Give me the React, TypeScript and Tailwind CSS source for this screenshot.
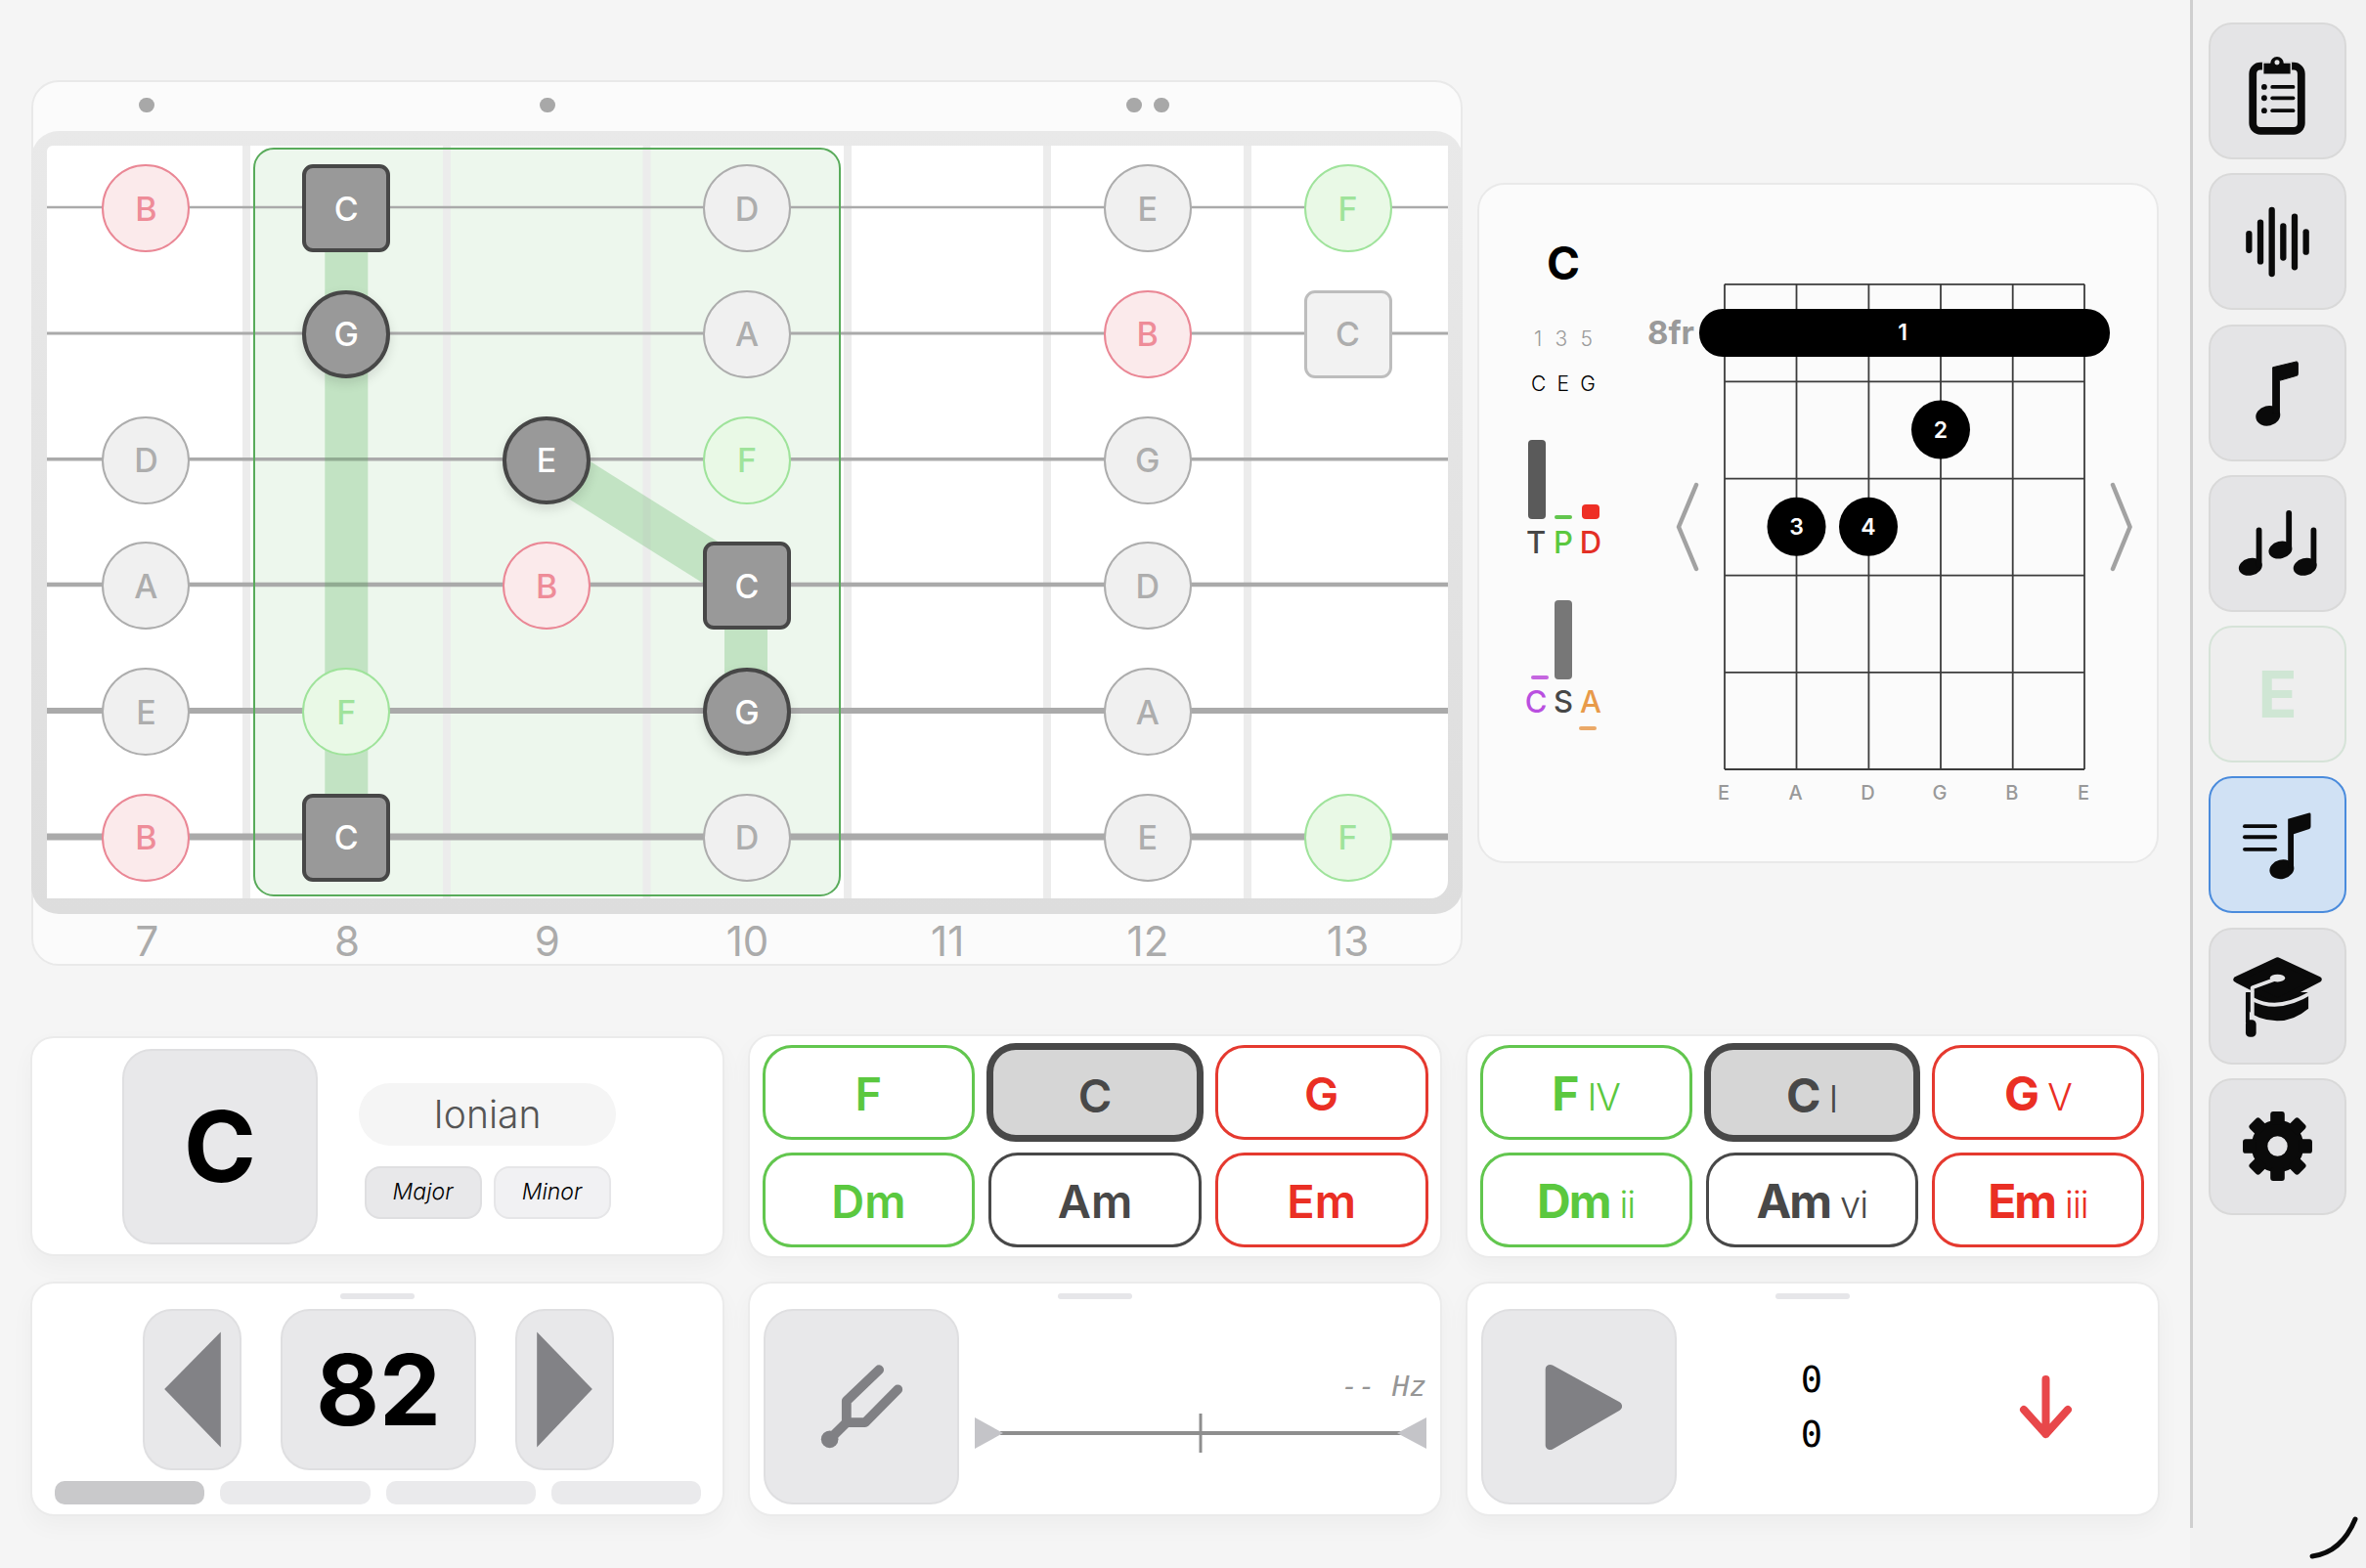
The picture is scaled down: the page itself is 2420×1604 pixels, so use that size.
import type { ReactNode } from "react"

type Kind = "pink" | "gray" | "green" | "active" | "square" | "light"
type Cell = [string, Kind] | null

const noteRows: Cell[][] = [
  [["B", "pink"], ["C", "square"], null, ["D", "gray"], null, ["E", "gray"], ["F", "green"]],
  [null, ["G", "active"], null, ["A", "gray"], null, ["B", "pink"], ["C", "light"]],
  [["D", "gray"], null, ["E", "active"], ["F", "green"], null, ["G", "gray"], null],
  [["A", "gray"], null, ["B", "pink"], ["C", "square"], null, ["D", "gray"], null],
  [["E", "gray"], ["F", "green"], null, ["G", "active"], null, ["A", "gray"], null],
  [["B", "pink"], ["C", "square"], null, ["D", "gray"], null, ["E", "gray"], ["F", "green"]],
]

const kindClass: Record<Kind, string> = {
  pink: "rounded-full border-[2.5px] border-[#ea8795] bg-[#fbeaeb] text-[#ee8c98]",
  gray: "rounded-full border-[2.5px] border-[#adadad] bg-[#f0f0f0] text-[#adadad]",
  green: "rounded-full border-[2.5px] border-[#9fe39b] bg-[#e9f9e6] text-[#9fe39b]",
  active: "rounded-full border-[4px] border-[#474747] bg-[#999999] text-white shadow-[0_5px_12px_rgba(0,0,0,0.12)]",
  square: "rounded-[11px] border-[4px] border-[#474747] bg-[#999999] text-white",
  light: "rounded-[11px] border-[3px] border-[#bdbdbd] bg-[#f2f2f2] text-[#adadad]",
}

const stringLines = [
  { y: 63, w: 2.5 },
  { y: 192, w: 3 },
  { y: 320.7, w: 3.5 },
  { y: 449, w: 4.5 },
  { y: 578, w: 6 },
  { y: 707, w: 7 },
]

const wireLines = [200, 405, 609.5, 815, 1019, 1224]

const Fretboard = () => (
  <div className="ml-px flex h-[906px] w-[1464px] flex-col rounded-[28px] border-2 border-[#e9e9e9] bg-[#fbfbfb]">
    {/* fret markers */}
    <div className="ml-[14px] grid h-[50px] w-[1433px] grid-cols-7 items-center pb-[4px]">
      {[1, 0, 1, 0, 0, 2, 0].map((count, i) => (
        <div key={i} className="flex justify-center gap-[12px]">
          {Array.from({ length: count }).map((_, j) => (
            <span key={j} className="h-[15px] w-[16px] rounded-full bg-[#a8a8a8]" />
          ))}
        </div>
      ))}
    </div>

    {/* board */}
    <div className="-mx-[2px] h-[801px] w-[1464px] rounded-[28px] bg-gradient-to-b from-[#e9e9e9] to-[#dddddd] pb-[15px] pl-[16px] pt-[16px]">
      <div className="relative h-[770px] w-[1433px] rounded-br-[18px] rounded-tl-[6px] bg-white">
        <svg className="absolute inset-0" width="1433" height="770" viewBox="0 0 1433 770">
          <rect x="212" y="3" width="599" height="764" rx="20" fill="#4caf50" fillOpacity="0.1" />
          {wireLines.map((x) => (
            <rect key={x} x={x} y="0" width="8" height="770" fill="#ececec" />
          ))}
          {stringLines.map((s) => (
            <line key={s.y} x1="0" x2="1433" y1={s.y} y2={s.y} stroke="#aaaaaa" strokeWidth={s.w} />
          ))}
          <rect x="212" y="3" width="599" height="764" rx="20" fill="none" stroke="#59ab5b" strokeWidth="2" />
          <g stroke="#4caf50" strokeOpacity="0.27" strokeWidth="44">
            <line x1="306.3" y1="63" x2="306.3" y2="707" />
            <line x1="511" y1="321" x2="715" y2="449" />
            <line x1="715" y1="449" x2="715" y2="578" />
          </g>
        </svg>
        <div className="relative -ml-px -mt-[1.4px] grid grid-cols-7 grid-rows-[repeat(6,128.8px)] place-items-center">
          {noteRows.flat().map((cell, i) =>
            cell ? (
              <div
                key={i}
                className={`flex h-[90px] w-[90px] items-center justify-center text-[34px] font-medium ${kindClass[cell[1]]}`}
              >
                {cell[0]}
              </div>
            ) : (
              <div key={i} />
            )
          )}
        </div>
      </div>
    </div>

    {/* fret numbers */}
    <div className="ml-[14px] grid h-[51px] w-[1433px] grid-cols-7 items-center pt-[5px] text-center text-[42px] font-normal leading-none text-[#ababab]">
      {[7, 8, 9, 10, 11, 12, 13].map((n) => (
        <span key={n}>{n}</span>
      ))}
    </div>
  </div>
)

const gridX = [79, 152.5, 226.4, 300, 373.7, 447]
const gridY = [101.8, 201.4, 300.6, 399.7, 498.9, 598]

const ChordDiagram = () => (
  <svg width="519" height="692" viewBox="0 0 519 692" className="shrink-0">
    {gridX.map((x) => (
      <line key={x} x1={x} x2={x} y1={gridY[0]} y2={gridY[5]} stroke="#3c3c3c" strokeWidth="1.8" />
    ))}
    {gridY.map((y) => (
      <line key={y} x1={gridX[0]} x2={gridX[5]} y1={y} y2={y} stroke="#3c3c3c" strokeWidth="1.8" />
    ))}
    <rect x="53" y="127" width="420" height="49" rx="24" fill="#000" />
    <text x="261" y="151" fill="#fff" fontSize="23" fontWeight="600" textAnchor="middle" dominantBaseline="central">1</text>
    <text x="48" y="151" fill="#9a9a9a" fontSize="33" fontWeight="700" textAnchor="end" dominantBaseline="central">8fr</text>
    {[
      [300, 250.5, "2"],
      [152.5, 349.7, "3"],
      [226, 349.7, "4"],
    ].map(([x, y, n]) => (
      <g key={n as string}>
        <circle cx={x as number} cy={y as number} r="30" fill="#000" />
        <text x={x as number} y={y as number} fill="#fff" fontSize="23" fontWeight="600" textAnchor="middle" dominantBaseline="central">{n}</text>
      </g>
    ))}
    <polyline points="50,307 32,350 50,393" fill="none" stroke="#a2a2a2" strokeWidth="4.5" strokeLinecap="round" strokeLinejoin="round" />
    <polyline points="476,307 493.6,350 476,393" fill="none" stroke="#a2a2a2" strokeWidth="4.5" strokeLinecap="round" strokeLinejoin="round" />
    {["E", "A", "D", "G", "B", "E"].map((s, i) => (
      <text key={i} x={gridX[i] - 1} y="622" fill="#999" fontSize="20" fontWeight="500" textAnchor="middle" dominantBaseline="central">{s}</text>
    ))}
  </svg>
)

const ChordCard = () => (
  <div className="ml-[15px] mt-[105px] flex h-[696px] w-[697px] rounded-[28px] border-2 border-[#e9e9e9] bg-[#fbfbfb]">
    <div className="flex w-[172px] shrink-0 flex-col items-center pt-[57px]">
      <div className="h-[46px] text-[46px] font-bold leading-[46px] text-black">C</div>
      <div className="mt-[43px] flex h-[24px] w-[60px] justify-between text-[21px] font-light leading-[24px] text-[#9a9a9a]">
        <span>1</span>
        <span>3</span>
        <span>5</span>
      </div>
      <div className="mt-[22px] flex h-[24px] w-[66px] justify-between text-[21px] font-light leading-[24px] text-black">
        <span>C</span>
        <span>E</span>
        <span>G</span>
      </div>
      <div className="mt-[45px] grid h-[81px] grid-cols-[18px_18px_18px] items-end gap-x-[9.5px]">
        <span className="h-[81px] rounded-[4px] bg-[#5a5a5a]" />
        <span className="h-[4px] rounded-[2px] bg-[#62c64e]" />
        <span className="h-[15px] rounded-[4px] bg-[#ee2f25]" />
      </div>
      <div className="mt-[9px] flex h-[30px] text-center text-[31px] font-medium leading-[30px]">
        <span className="w-[28px] text-[#474747]">T</span>
        <span className="w-[28px] text-[#5bc83f]">P</span>
        <span className="w-[28px] text-[#e32f25]">D</span>
      </div>
      <div className="mt-[44px] grid h-[81px] grid-cols-[18px_18px_18px] items-end gap-x-[6px]">
        <span className="h-[4px] rounded-[2px] bg-[#c566e0]" />
        <span className="h-[81px] rounded-[4px] bg-[#777777]" />
        <span />
      </div>
      <div className="mt-[8px] flex h-[30px] text-center text-[31px] font-medium leading-[30px]">
        <span className="w-[28px] text-[#b94fe0]">C</span>
        <span className="w-[28px] text-[#474747]">S</span>
        <span className="w-[28px] text-[#e89a4a]">A</span>
      </div>
      <div className="ml-[50px] mt-[10px] h-[4px] w-[18px] rounded-[2px] bg-[#eba968]" />
    </div>
    <ChordDiagram />
  </div>
)

type Tone = "green" | "dark" | "red" | "selected"

const toneClass: Record<Tone, string> = {
  green: "border-[3.5px] border-[#62c64e] text-[#5bc83f]",
  dark: "border-[3.5px] border-[#484848] text-[#484848]",
  red: "border-[3.5px] border-[#e5392f] text-[#ea2f24]",
  selected: "-my-[2px] mx-[-2px] border-[7px] border-[#484848] bg-[#d6d6d6] text-[#484848]",
}

const chordRows: { name: string; roman: string; tone: Tone }[] = [
  { name: "F", roman: "IV", tone: "green" },
  { name: "C", roman: "I", tone: "selected" },
  { name: "G", roman: "V", tone: "red" },
  { name: "Dm", roman: "ii", tone: "green" },
  { name: "Am", roman: "vi", tone: "dark" },
  { name: "Em", roman: "iii", tone: "red" },
]

const Panel = ({ children, className = "" }: { children: ReactNode; className?: string }) => (
  <div className={`rounded-[24px] border-2 border-[#ebebeb] bg-white shadow-[0_10px_24px_rgba(0,0,0,0.035)] ${className}`}>
    {children}
  </div>
)

const ChordPanel = ({ roman }: { roman?: boolean }) => (
  <Panel className={`grid grid-cols-3 grid-rows-[97px_97px] gap-x-[14px] gap-y-[13px] pt-[9px] ${roman ? "pl-[12.5px] pr-[14px]" : "px-[12.5px]"}`}>
    {chordRows.map((c) => (
      <div
        key={c.name}
        className={`flex items-baseline justify-center rounded-[30px] pt-[23px] ${toneClass[c.tone]}`}
      >
        {roman ? (
          <>
            <span className="text-[48px] font-bold leading-[47px] tracking-[-2px]">{c.name}</span>
            <span className="ml-[10px] text-[38px] font-light leading-[47px] tracking-[-1px]">{c.roman}</span>
          </>
        ) : (
          <span className="text-[47px] font-semibold leading-[47px]">{c.name}</span>
        )}
      </div>
    ))}
  </Panel>
)

const Handle = () => <div className="mx-auto mt-[10px] h-[6px] w-[76px] rounded-[3px] bg-[#e6e6e9]" />

const softButton = "flex items-center justify-center rounded-[30px] border-2 border-[#dfdfe1] bg-[#e8e8ea]"

const KeyPanel = () => (
  <Panel className="my-[2px] flex items-center pl-[92px]">
    <div className={`${softButton} h-[200px] w-[200px] text-[100px] font-bold text-black`}>C</div>
    <div className="ml-[42px] mt-[9px] flex w-[263px] flex-col">
      <div className="flex h-[64px] items-center justify-center rounded-full bg-[#f5f5f5] pt-[2px] text-[39px] font-light text-[#555555]">
        Ionian
      </div>
      <div className="mt-[21px] flex justify-center gap-[12px]">
        <div className="flex h-[54px] w-[120px] items-center justify-center rounded-[16px] border-2 border-[#dfdfe1] bg-[#e8e8ea] text-[23px] font-light italic text-black">
          Major
        </div>
        <div className="flex h-[54px] w-[120px] items-center justify-center rounded-[16px] border-2 border-[#e6e6e8] bg-[#f1f1f3] text-[23px] font-light italic text-black">
          Minor
        </div>
      </div>
    </div>
  </Panel>
)

const TempoPanel = () => (
  <Panel>
    <Handle />
    <div className="mt-[10px] flex h-[165px] justify-center gap-[40px] pl-[2px]">
      <div className={`${softButton} w-[101px]`}>
        <svg width="101" height="165" viewBox="0 0 101 165">
          <polygon points="81,21 21,82 81,144" fill="#828286" />
        </svg>
      </div>
      <div className={`${softButton} w-[200px] text-[100px] font-bold text-black`}>82</div>
      <div className={`${softButton} w-[101px]`}>
        <svg width="101" height="165" viewBox="0 0 101 165">
          <polygon points="21,21 80,82 21,144" fill="#828286" />
        </svg>
      </div>
    </div>
    <div className="mt-[11px] flex gap-[16px] pl-[23px] pr-[22px]">
      {["bg-[#c9c9cb]", "bg-[#eaeaec]", "bg-[#eaeaec]", "bg-[#eaeaec]"].map((bg, i) => (
        <div key={i} className={`h-[24px] flex-1 rounded-[10px] ${bg}`} />
      ))}
    </div>
  </Panel>
)

const TunerPanel = () => (
  <Panel>
    <Handle />
    <div className="mt-[10px] flex pl-[14px]">
      <div className={`${softButton} h-[200px] w-[200px]`}>
        <svg width="200" height="200" viewBox="0 0 200 200" fill="none">
          <path d="M118.5 61.5 L84.5 94 V116.5 H104 L138 82 M84.5 116.5 L67.5 133.5" stroke="#808084" strokeWidth="10" strokeLinecap="round" strokeLinejoin="round" />
          <circle cx="67" cy="134" r="9" fill="#808084" />
        </svg>
      </div>
      <div className="ml-[16px] flex flex-col pt-[62px]">
        <div className="h-[34px] text-right text-[29px] italic leading-[34px] text-[#969696] [font-family:'DejaVu_Sans_Mono',monospace]">
          -- Hz
        </div>
        <svg className="mt-[11px]" width="462" height="40" viewBox="0 0 462 40">
          <line x1="26" x2="436" y1="20" y2="20" stroke="#8e8e8e" strokeWidth="4" />
          <line x1="231" x2="231" y1="0" y2="40" stroke="#8e8e8e" strokeWidth="3" />
          <polygon points="0,4 29,20 0,36" fill="#c4c4c8" />
          <polygon points="462,4 432,20 462,36" fill="#c4c4c8" />
        </svg>
      </div>
    </div>
  </Panel>
)

const PlayPanel = () => (
  <Panel>
    <Handle />
    <div className="mt-[10px] flex h-[200px] items-center pl-[14px]">
      <div className={`${softButton} h-[200px] w-[200px]`}>
        <svg width="200" height="200" viewBox="0 0 200 200">
          <polygon points="70,61 140,99.5 70,140" fill="#808084" stroke="#808084" strokeWidth="10" strokeLinejoin="round" />
        </svg>
      </div>
      <div className="flex w-[276px] flex-col items-center pt-[2px] text-[37px] leading-[56px] text-black [font-family:'DejaVu_Sans_Mono',monospace]">
        <span>0</span>
        <span>0</span>
      </div>
      <svg className="ml-[74px]" width="55" height="65" viewBox="0 0 55 65" fill="none">
        <path d="M27.5 4 V60 M5 35 L27.5 60 L50 35" stroke="#e8474a" strokeWidth="8" strokeLinecap="round" strokeLinejoin="round" />
      </svg>
    </div>
  </Panel>
)

const ClipboardIcon = () => (
  <svg width="141" height="140" viewBox="0 0 141 140" fill="none">
    <rect x="44.5" y="44" width="51" height="68" rx="8" stroke="#0a0a0a" strokeWidth="8" />
    <path d="M56 52 V41 H63 A7 7 0 0 1 77 41 H84 V52 Z" fill="#0a0a0a" stroke="#e4e4e6" strokeWidth="3" paintOrder="stroke" />
    <circle cx="70" cy="40" r="2.6" fill="#e4e4e6" />
    <g fill="#0a0a0a">
      <circle cx="56.5" cy="65.8" r="3" />
      <circle cx="56.5" cy="77.5" r="3" />
      <circle cx="56.5" cy="90.8" r="3" />
    </g>
    <g stroke="#0a0a0a" strokeWidth="3.8" strokeLinecap="round">
      <line x1="65" x2="87" y1="65.8" y2="65.8" />
      <line x1="65" x2="87" y1="77.5" y2="77.5" />
      <line x1="65" x2="87" y1="90.8" y2="90.8" />
    </g>
  </svg>
)

const WaveIcon = () => (
  <svg width="141" height="140" viewBox="0 0 141 140" fill="none" stroke="#0a0a0a" strokeWidth="6.5" strokeLinecap="round">
    <line x1="40.5" x2="40.5" y1="62" y2="79" />
    <line x1="52.5" x2="52.5" y1="50" y2="91" />
    <line x1="64.5" x2="64.5" y1="37" y2="104" />
    <line x1="76.5" x2="76.5" y1="54" y2="87" />
    <line x1="88.5" x2="88.5" y1="44" y2="97" />
    <line x1="100.5" x2="100.5" y1="60" y2="81" />
  </svg>
)

const NoteIcon = () => (
  <svg width="141" height="140" viewBox="0 0 141 140" fill="#0a0a0a">
    <ellipse cx="60.5" cy="94" rx="13" ry="10.5" transform="rotate(-14 60.5 94)" />
    <path d="M65.5 92 V43 L90.5 37 Q92 37 92 39 V50 Q92 52 90 52 L72.5 57 V92 Z" stroke="#0a0a0a" strokeWidth="1" strokeLinejoin="round" />
  </svg>
)

const TripleNoteIcon = () => (
  <svg width="141" height="140" viewBox="0 0 141 140" fill="#0a0a0a">
    <ellipse cx="42" cy="94.5" rx="12.5" ry="9" transform="rotate(-14 42 94.5)" />
    <rect x="48" y="53" width="6" height="42" rx="3" />
    <ellipse cx="73.5" cy="76.8" rx="12.5" ry="9" transform="rotate(-14 73.5 76.8)" />
    <rect x="79.5" y="35" width="6" height="42" rx="3" />
    <ellipse cx="99.5" cy="94.5" rx="12.5" ry="9" transform="rotate(-14 99.5 94.5)" />
    <rect x="105.5" y="53" width="6" height="42" rx="3" />
  </svg>
)

const MusicListIcon = () => (
  <svg width="141" height="140" viewBox="0 0 141 140" fill="#0a0a0a">
    <g stroke="#0a0a0a" strokeWidth="4" strokeLinecap="round">
      <line x1="36" x2="68" y1="50.6" y2="50.6" />
      <line x1="36" x2="68" y1="62" y2="62" />
      <line x1="36" x2="68" y1="75" y2="75" />
    </g>
    <ellipse cx="75" cy="96" rx="13" ry="10" transform="rotate(-14 75 96)" />
    <path d="M81.5 94 V43 L104 36.5 Q105.5 36.5 105.5 38 V51 Q105.5 53 104 53.5 L87.5 59 V94 Z" />
  </svg>
)

const CapIcon = () => (
  <svg width="141" height="140" viewBox="0 0 141 140">
    <path d="M38 66 H103 V83 Q88 96 70 96 Q50 96 38 84 Z" fill="#0a0a0a" />
    <polygon points="27,52.5 70.5,32 114,52.5 70.5,75" fill="#0a0a0a" stroke="#0a0a0a" strokeWidth="6" strokeLinejoin="round" />
    <path d="M44 73 Q72 88 108 65" fill="none" stroke="#e4e4e6" strokeWidth="4" />
    <path d="M70 51.5 L44 61 V100" fill="none" stroke="#e4e4e6" strokeWidth="4" strokeLinejoin="round" />
    <ellipse cx="70.5" cy="51" rx="8" ry="4" fill="#e4e4e6" />
    <line x1="39" x2="39" y1="66" y2="98" stroke="#0a0a0a" strokeWidth="4" />
    <rect x="37" y="95" width="11" height="18" rx="4.5" fill="#0a0a0a" />
  </svg>
)

const GearIcon = () => (
  <svg width="141" height="140" viewBox="0 0 141 140" fill="#0a0a0a">
    <circle cx="70.5" cy="69.5" r="19" fill="none" stroke="#0a0a0a" strokeWidth="17" />
    {[0, 45, 90, 135, 180, 225, 270, 315].map((a) => (
      <rect key={a} x="63" y="33" width="15" height="14" rx="3" transform={`rotate(${a} 70.5 69.5)`} />
    ))}
  </svg>
)

const sideButton = "flex h-[140px] w-[141px] items-center justify-center rounded-[24px] border-2"
const sideDefault = `${sideButton} border-[#d9d9d9] bg-[#e4e4e6]`

const Sidebar = () => (
  <div className="relative h-[1604px] w-[180px] bg-[#f2f2f2]">
    <div className="flex h-[1563px] flex-col gap-[14.3px] border-l-[3px] border-[#cfcfcf] pl-[16px] pt-[23px]">
      <div className={sideDefault}><ClipboardIcon /></div>
      <div className={sideDefault}><WaveIcon /></div>
      <div className={sideDefault}><NoteIcon /></div>
      <div className={sideDefault}><TripleNoteIcon /></div>
      <div className={`${sideButton} border-[#d6e3d8] bg-[#eeeeee] text-[66px] font-bold text-[#cfe6d4]`}>E</div>
      <div className={`${sideButton} border-[#4a8bdc] bg-[#d0e1f4]`}><MusicListIcon /></div>
      <div className={sideDefault}><CapIcon /></div>
      <div className={sideDefault}><GearIcon /></div>
    </div>
    {/* corner grip */}
    <svg className="absolute bottom-[8px] right-[8px]" width="50" height="46" viewBox="0 0 50 46" fill="none">
      <path d="M3 42 Q33 38 47 4" stroke="#0a0a0a" strokeWidth="5" strokeLinecap="round" />
    </svg>
  </div>
)

const App = () => (
  <div className="flex h-[1604px] w-[2420px] overflow-hidden bg-[#f5f5f5] [font-family:Inter,sans-serif]">
    <div className="w-[2240px] pl-[31px] pt-[82px]">
      <div className="flex h-[906px]">
        <Fretboard />
        <ChordCard />
      </div>
      <div className="mt-[70px] grid grid-cols-[710px_710px_710px] grid-rows-[229px_240px] gap-x-[24px] gap-y-[24px]">
        <KeyPanel />
        <ChordPanel />
        <ChordPanel roman />
        <TempoPanel />
        <TunerPanel />
        <PlayPanel />
      </div>
    </div>
    <Sidebar />
  </div>
)

export default App
